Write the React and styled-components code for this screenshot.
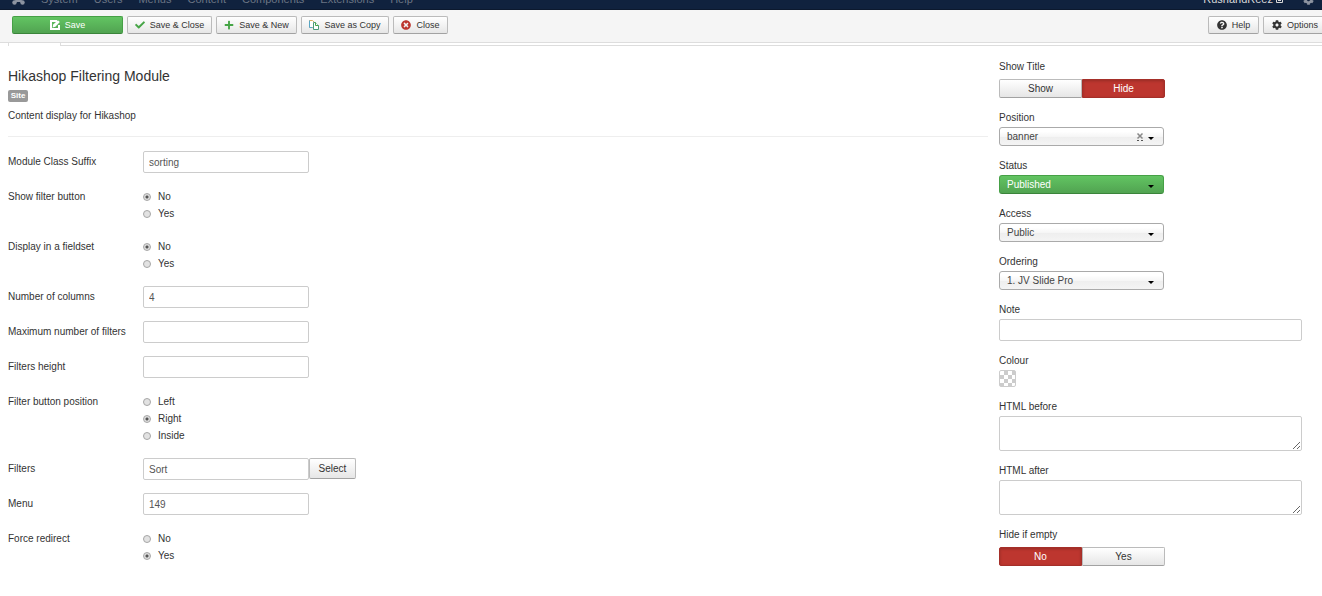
import { useState } from "react";
import styled, { createGlobalStyle, css } from "styled-components";
import {
  FaCheck,
  FaCog,
  FaPlus,
  FaQuestionCircle,
  FaTimesCircle,
} from "react-icons/fa";

const menuItems = [
  "System",
  "Users",
  "Menus",
  "Content",
  "Components",
  "Extensions",
  "Help",
];

export default function App() {
  return (
    <>
      <GlobalStyle />
      <Navbar>
        <Brand href="#" aria-label="Control panel">
          <JoomlaIcon />
        </Brand>
        {menuItems.map((item) => (
          <NavLink href="#" key={item}>
            {item}
          </NavLink>
        ))}
        <SiteLink href="#">
          RushandReez <ExternalIcon />
        </SiteLink>
        <NavLink href="#" aria-label="User menu">
          <FaCog size={11} color="#8c93a0" />
        </NavLink>
      </Navbar>

      <Toolbar>
        <ToolButton $width={111} $success>
          <ApplyIcon />
          Save
        </ToolButton>
        <ToolButton $width={85}>
          <FaCheck color="#46a546" />
          Save &amp; Close
        </ToolButton>
        <ToolButton $width={81}>
          <FaPlus color="#46a546" />
          Save &amp; New
        </ToolButton>
        <ToolButton $width={88}>
          <CopyIcon />
          Save as Copy
        </ToolButton>
        <ToolButton $width={55}>
          <FaTimesCircle color="#bd362f" />
          Close
        </ToolButton>
        <ToolEnd>
          <ToolButton $width={51}>
            <FaQuestionCircle />
            Help
          </ToolButton>
          <ToolButton $width={64}>
            <FaCog />
            Options
          </ToolButton>
        </ToolEnd>
      </Toolbar>

      <TabStrip>
        <ActiveTab />
        <TabLine />
      </TabStrip>

      <Content>
        <ModuleOptions />
        <Sidebar />
      </Content>
    </>
  );
}

function ModuleOptions() {
  return (
    <main>
      <Title>Hikashop Filtering Module</Title>
      <Badge>Site</Badge>
      <Description>Content display for Hikashop</Description>
      <Separator />

      <Rows>
        <TextRow id="suffix" label="Module Class Suffix" value="sorting" />
        <RadioRow
          name="filter-button"
          label="Show filter button"
          options={["No", "Yes"]}
          selected="No"
        />
        <RadioRow
          name="fieldset"
          label="Display in a fieldset"
          options={["No", "Yes"]}
          selected="No"
        />
        <TextRow id="columns" label="Number of columns" value="4" />
        <TextRow id="max-filters" label="Maximum number of filters" />
        <TextRow id="height" label="Filters height" />
        <RadioRow
          name="button-position"
          label="Filter button position"
          options={["Left", "Right", "Inside"]}
          selected="Right"
        />
        <TextRow id="filters" label="Filters" value="Sort">
          <SelectButton>Select</SelectButton>
        </TextRow>
        <TextRow id="menu" label="Menu" value="149" />
        <RadioRow
          name="redirect"
          label="Force redirect"
          options={["No", "Yes"]}
          selected="Yes"
        />
      </Rows>
    </main>
  );
}

function TextRow({ id, label, value = "", children }) {
  return (
    <Row>
      <RowLabel htmlFor={id}>{label}</RowLabel>
      <TextInput id={id} defaultValue={value} />
      {children}
    </Row>
  );
}

function RadioRow({ name, label, options, selected }) {
  return (
    <Row role="radiogroup" aria-labelledby={name}>
      <RowLabel as="span" id={name}>
        {label}
      </RowLabel>
      <Options>
        {options.map((option) => (
          <Option key={option}>
            <Radio name={name} defaultChecked={option === selected} />
            {option}
          </Option>
        ))}
      </Options>
    </Row>
  );
}

function Sidebar() {
  return (
    <Aside>
      <Toggle
        name="show-title"
        label="Show Title"
        options={["Show", "Hide"]}
        negative="Hide"
        selected="Hide"
      />
      <Dropdown id="position" label="Position" value="banner" clearable />
      <Dropdown id="status" label="Status" value="Published" success />
      <Dropdown id="access" label="Access" value="Public" />
      <Dropdown id="ordering" label="Ordering" value="1. JV Slide Pro" />
      <div>
        <FieldLabel htmlFor="note">Note</FieldLabel>
        <NoteInput id="note" />
      </div>
      <div>
        <FieldLabel htmlFor="colour">Colour</FieldLabel>
        <Swatch id="colour" aria-label="Colour" />
      </div>
      <div>
        <FieldLabel htmlFor="before">HTML before</FieldLabel>
        <TextArea id="before" />
      </div>
      <div>
        <FieldLabel htmlFor="after">HTML after</FieldLabel>
        <TextArea id="after" />
      </div>
      <Toggle
        name="hide-empty"
        label="Hide if empty"
        options={["No", "Yes"]}
        negative="No"
        selected="No"
      />
    </Aside>
  );
}

function Dropdown({ id, label, value, success, clearable }) {
  return (
    <div>
      <FieldLabel htmlFor={id}>{label}</FieldLabel>
      <SelectWrap>
        <Select id={id} $success={success}>
          <option>{value}</option>
        </Select>
        {clearable && (
          <ClearButton aria-label="Clear">
            <ClearIcon />
          </ClearButton>
        )}
        <Caret />
      </SelectWrap>
    </div>
  );
}

function Toggle({ name, label, options, negative, selected }) {
  const [value, setValue] = useState(selected);

  return (
    <div role="radiogroup" aria-labelledby={name}>
      <FieldLabel as="span" id={name}>
        {label}
      </FieldLabel>
      <ToggleGroup>
        {options.map((option) => (
          <ToggleOption
            key={option}
            $active={value === option}
            $negative={option === negative}
          >
            <input
              type="radio"
              name={name}
              checked={value === option}
              onChange={() => setValue(option)}
            />
            {option}
          </ToggleOption>
        ))}
      </ToggleGroup>
    </div>
  );
}

function JoomlaIcon() {
  return (
    <svg width="13" height="13" viewBox="0 0 13 13" fill="none">
      <path
        d="M3 10 10 3M3 3l7 7M2.5 10.500 4.500 9h4l2 1.500"
        stroke="#8c93a0"
        strokeWidth="2"
      />
      <circle cx="2.500" cy="10.500" r="2.200" fill="#8c93a0" />
      <circle cx="10.500" cy="10.500" r="2.200" fill="#8c93a0" />
      <circle cx="2.500" cy="2.500" r="2.200" fill="#8c93a0" />
      <circle cx="10.500" cy="2.500" r="2.200" fill="#8c93a0" />
    </svg>
  );
}

function ExternalIcon() {
  return (
    <svg width="7" height="8" viewBox="0 0 7 8" fill="none" stroke="#d9d9d9">
      <path d="M.5.500h6v7h-6zM2 5.500h3" />
    </svg>
  );
}

function ApplyIcon() {
  return (
    <svg width="10" height="10" viewBox="0 0 10 10" fill="none">
      <path d="M7 1H1v8h8V5" stroke="#fff" strokeWidth="2" />
      <path d="M2.600 7.400l.6-2.800L8 .2 9.800 2 5.400 6.800z" fill="#fff" />
    </svg>
  );
}

function CopyIcon() {
  return (
    <svg width="10" height="10" viewBox="0 0 10 10" fill="#fff">
      <path d="M.5.500h3L5.500 2.500v5h-5z" stroke="#d9b064" />
      <path d="M.5.500v7h3" stroke="#58a5c4" />
      <path d="M4.500 2.500h2l3 3v4h-5z" stroke="#4a9a7a" />
      <path d="M6.500 2.500v3h3" stroke="#46a546" />
    </svg>
  );
}

function ClearIcon() {
  return (
    <svg width="8" height="10" viewBox="0 0 8 10" fill="none">
      <path d="M1.500 1.500l5 5M6.500 1.500l-5 5" stroke="#888" strokeWidth="1.500" />
      <path d="M1 8.500h2M5 8.500h2" stroke="#555" />
    </svg>
  );
}

function Caret() {
  return (
    <CaretIcon width="6" height="3" viewBox="0 0 6 3" aria-hidden="true">
      <path d="M0 0h6L3 3z" />
    </CaretIcon>
  );
}

const GlobalStyle = createGlobalStyle`
  * {
    box-sizing: border-box;
  }

  body {
    margin: 0;
    background: #fff;
    color: #333;
    font-family: "Liberation Sans", Arial, sans-serif;
    font-size: 10px;
    line-height: 14px;
  }

  button,
  input,
  select,
  textarea {
    font: inherit;
    color: inherit;
  }
`;

const greyButton = css`
  border: 1px solid #bbb;
  border-bottom-color: #a2a2a2;
  background: linear-gradient(#fff, #e6e6e6);
`;

const greenButton = css`
  border: 1px solid #46a046;
  border-bottom-color: #3a843a;
  background: linear-gradient(#62c462, #51a351);
  color: #fff;
`;

const fieldBox = css`
  border: 1px solid #ccc;
  border-radius: 2px;
  background: #fff;
  color: #555;
`;

const Navbar = styled.nav`
  display: flex;
  align-items: flex-end;
  gap: 16px;
  height: 10px;
  padding: 0 8px 4px 12px;
  overflow: hidden;
  background: #10223e;
  border-bottom: 1px solid #0c192e;
  font-size: 11px;
  line-height: 12px;
`;

const NavLink = styled.a`
  color: #6b7584;
  text-decoration: none;

  svg {
    display: block;
  }
`;

const Brand = styled(NavLink)`
  width: 13px;
`;

const SiteLink = styled(NavLink)`
  margin-left: auto;
  margin-right: 4px;
  color: #d9d9d9;

  svg {
    display: inline-block;
  }
`;

const Toolbar = styled.header`
  display: flex;
  gap: 4px;
  padding: 6px 0 8px 12px;
  overflow: hidden;
  background: #f5f5f5;
  border-bottom: 1px solid #ddd;
`;

const ToolEnd = styled.div`
  display: flex;
  gap: 4px;
  margin-left: auto;
  margin-right: -5px;
`;

const ToolButton = styled.button`
  display: flex;
  align-items: center;
  justify-content: center;
  gap: 5px;
  width: ${({ $width }) => $width}px;
  height: 18px;
  padding: 0;
  border-radius: 2px;
  font-size: 9px;
  white-space: nowrap;
  ${({ $success }) => ($success ? greenButton : greyButton)}

  svg {
    width: 10px;
    height: 10px;
  }
`;

const TabStrip = styled.div`
  display: flex;
  height: 3px;
  padding-left: 8px;
`;

const ActiveTab = styled.div`
  width: 53px;
  border: solid #ddd;
  border-width: 0 1px;
`;

const TabLine = styled.div`
  flex: 1;
  border-bottom: 1px solid #ddd;
`;

const Content = styled.div`
  display: grid;
  grid-template-columns: 980fr 303fr;
  gap: 11px;
  padding: 12px 20px 28px 8px;
`;

const Title = styled.h1`
  margin: 8px 0 4px;
  font-size: 14px;
  font-weight: 400;
  line-height: 20px;
`;

const Badge = styled.span`
  display: block;
  width: 20px;
  border-radius: 2px;
  background: #999;
  color: #fff;
  font-size: 8px;
  font-weight: 700;
  line-height: 12px;
  text-align: center;
`;

const Description = styled.p`
  margin: 7px 0 13px;
`;

const Separator = styled.hr`
  margin: 0 0 14px;
  border: 0;
  border-top: 1px solid #eee;
`;

const Rows = styled.div`
  display: flex;
  flex-direction: column;
  gap: 13px;
`;

const Row = styled.div`
  display: flex;
  align-items: flex-start;
`;

const RowLabel = styled.label`
  width: 135px;
  line-height: 22px;
`;

const TextInput = styled.input`
  ${fieldBox}
  width: 166px;
  height: 22px;
  padding: 0 5px;
`;

const SelectButton = styled.button`
  ${greyButton}
  width: 47px;
  height: 21px;
  padding: 0;
  border-radius: 2px;
`;

const Options = styled.div`
  padding: 2px 0 1px;
`;

const Option = styled.label`
  display: flex;
  align-items: center;
  gap: 7px;
  line-height: 17px;
`;

const Radio = styled.input.attrs({ type: "radio" })`
  appearance: none;
  width: 8px;
  height: 8px;
  margin: 0;
  border: 1px solid #a6a6a6;
  border-radius: 50%;
  background: #e2e2e2;

  &:checked {
    background: radial-gradient(circle, #555 0 1px, #ddd 2px);
  }
`;

const Aside = styled.aside`
  display: flex;
  flex-direction: column;
  gap: 11px;
`;

const FieldLabel = styled.label`
  display: block;
  line-height: 18px;
`;

const ToggleGroup = styled.div`
  display: flex;
  width: 166px;
  padding-top: 3px;
`;

const ToggleOption = styled.label`
  ${greyButton}
  flex: 1;
  height: 19px;
  line-height: 18px;
  text-align: center;

  &:first-of-type {
    border-radius: 2px 0 0 2px;
  }

  &:last-of-type {
    border-radius: 0 2px 2px 0;
  }

  input {
    position: absolute;
    opacity: 0;
    pointer-events: none;
  }

  ${({ $active, $negative }) =>
    $active &&
    css`
      border-color: ${$negative ? "#a52f29" : "#46a046"};
      background: ${$negative ? "#bd362f" : "#51a351"};
      box-shadow: inset 0 1px 3px rgba(0, 0, 0, 0.2);
      color: #fff;
    `}
`;

const SelectWrap = styled.div`
  position: relative;
  width: 165px;
`;

const Select = styled.select`
  display: block;
  width: 100%;
  height: 19px;
  padding: 0 7px;
  appearance: none;
  border: 1px solid #aaa;
  border-radius: 3px;
  background: linear-gradient(#fff 20%, #f6f6f6 50%, #eee 52%, #f4f4f4 100%);
  color: #444;
  ${({ $success }) => $success && greenButton}
`;

const CaretIcon = styled.svg`
  position: absolute;
  top: 10px;
  right: 10px;
  pointer-events: none;
`;

const ClearButton = styled.button`
  position: absolute;
  top: 5px;
  right: 20px;
  padding: 0;
  border: 0;
  background: none;

  svg {
    display: block;
  }
`;

const NoteInput = styled.input`
  ${fieldBox}
  display: block;
  width: 100%;
  height: 22px;
  padding: 0 5px;
`;

const TextArea = styled.textarea`
  ${fieldBox}
  display: block;
  width: 100%;
  height: 35px;
  padding: 3px 5px;
`;

const Swatch = styled.button`
  display: block;
  width: 17px;
  height: 17px;
  padding: 0;
  border: 1px solid #ccc;
  border-radius: 2px;
  background: repeating-conic-gradient(#ccc 0 25%, #fff 0 50%) 0 0 / 8px 8px;
`;
